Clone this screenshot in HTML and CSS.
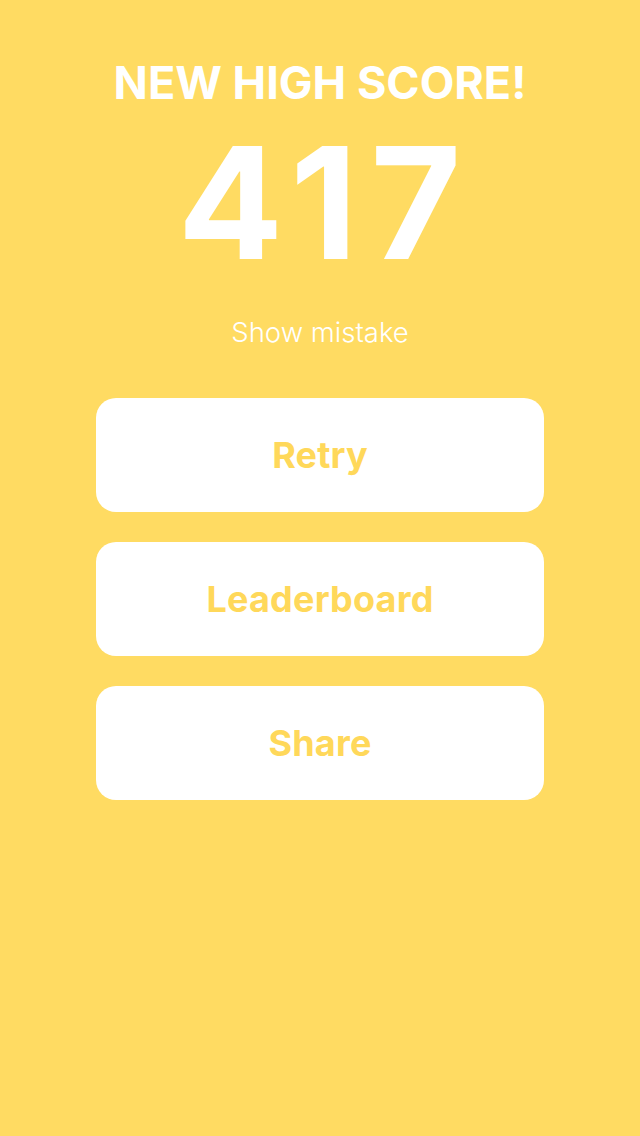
FILE: index.html
```html
<!DOCTYPE html>
<html lang="en">
<head>
    <meta charset="UTF-8">
    <meta name="viewport" content="width=device-width, initial-scale=1.0">
    <title>Game Over</title>
    <link rel="stylesheet" href="styles.css">
</head>
<body>

<div class="screen">
    <h1 class="title">NEW HIGH SCORE!</h1>
    <div class="score">417</div>
    <a class="mistake" href="#">Show mistake</a>

    <!-- Menu buttons -->
    <div class="menu">
        <button class="menu-btn">Retry</button>
        <button class="menu-btn">Leaderboard</button>
        <button class="menu-btn">Share</button>
    </div>
</div>

</body>
</html>
```

FILE: styles.css
```css
body {
    margin: 0;
    font-family: Inter, "Noto Sans", sans-serif;
    background-color: #ffdb62;
    min-height: 100vh;
}
.screen {
    display: flex;
    flex-direction: column;
    align-items: center;
    padding-top: 55px;
}
.title {
    margin: 0;
    font-size: 45px;
    font-weight: 700;
    line-height: 56px;
    color: white;
}
.score {
    margin-top: 2px;
    padding-left: 12px;
    font-size: 156px;
    font-weight: 700;
    line-height: 180px;
    color: white;
    letter-spacing: 13px;
}
.mistake {
    margin-top: 19px;
    font-size: 27.5px;
    font-weight: 300;
    line-height: 40px;
    color: white;
    text-decoration: none;
}
.menu {
    margin-top: 46px;
    display: flex;
    flex-direction: column;
    gap: 30px;
}
.menu-btn {
    width: 448px;
    height: 114px;
    border: none;
    border-radius: 20px;
    background-color: white;
    color: #ffd85a;
    font-family: Inter, "Noto Sans", sans-serif;
    font-size: 36px;
    font-weight: 700;
    letter-spacing: 0.2px;
    cursor: pointer;
}
```
